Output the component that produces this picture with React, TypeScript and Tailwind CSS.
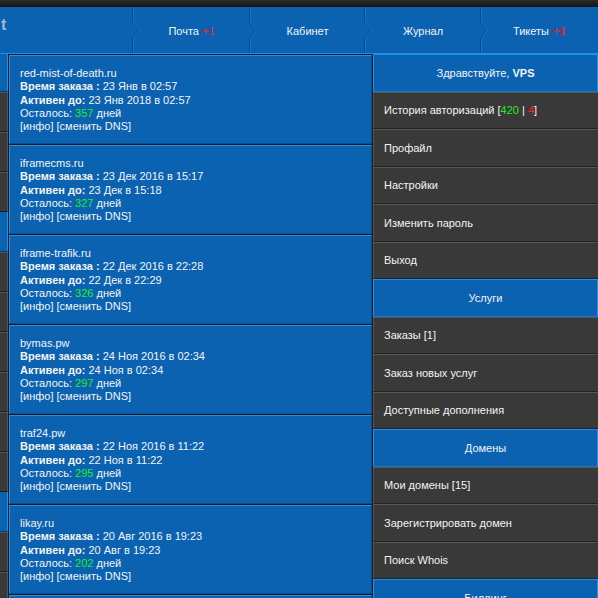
import React from "react";

const font = { fontFamily: '"Liberation Sans", Arial, sans-serif' };

const tabs = [
  { label: "Почта", badge: "+1", w: "w-[117px]", serif: false },
  { label: "Кабинет", w: "w-[115px]" },
  { label: "Журнал", w: "w-[116px]" },
  { label: "Тикеты", badge: "+1", w: "w-[117px]", serif: true },
];

const orders = [
  { domain: "red-mist-of-death.ru", ordered: "23 Янв в 02:57", active: "23 Янв 2018 в 02:57", left: 357 },
  { domain: "iframecms.ru", ordered: "23 Дек 2016 в 15:17", active: "23 Дек в 15:18", left: 327 },
  { domain: "iframe-trafik.ru", ordered: "22 Дек 2016 в 22:28", active: "22 Дек в 22:29", left: 326 },
  { domain: "bymas.pw", ordered: "24 Ноя 2016 в 02:34", active: "24 Ноя в 02:34", left: 297 },
  { domain: "traf24.pw", ordered: "22 Ноя 2016 в 11:22", active: "22 Ноя в 11:22", left: 295 },
  { domain: "likay.ru", ordered: "20 Авг 2016 в 19:23", active: "20 Авг в 19:23", left: 202 },
];

// левая полоска (обрезанное меню)
const strip = ["b", "d", "d", "d", "b", "d", "d", "d", "d", "d", "d", "b", "d", "d"];

type Item = { kind: "head" | "item"; text: React.ReactNode };

const menu: Item[] = [
  { kind: "head", text: <>Здравствуйте, <b>VPS</b></> },
  {
    kind: "item",
    text: (
      <>
        История авторизаций [<span className="text-[#22ee22]">420</span> | <span className="text-[#ff2222]">4</span>]
      </>
    ),
  },
  { kind: "item", text: "Профайл" },
  { kind: "item", text: "Настройки" },
  { kind: "item", text: "Изменить пароль" },
  { kind: "item", text: "Выход" },
  { kind: "head", text: "Услуги" },
  { kind: "item", text: "Заказы [1]" },
  { kind: "item", text: "Заказ новых услуг" },
  { kind: "item", text: "Доступные дополнения" },
  { kind: "head", text: "Домены" },
  { kind: "item", text: "Мои домены [15]" },
  { kind: "item", text: "Зарегистрировать домен" },
  { kind: "item", text: "Поиск Whois" },
  { kind: "head", text: "Биллинг" },
];

function Separator() {
  return (
    <svg className="absolute left-[-1px] top-0" width="10" height="46" viewBox="0 0 10 46">
      <path d="M0.5 0 V15 L6.5 23 L0.5 31 V46" fill="none" stroke="#0a4a8a" strokeWidth="1" />
      <path d="M1.5 0 V15 L7.5 23 L1.5 31 V46" fill="none" stroke="#1f7ed2" strokeWidth="1" opacity="0.6" />
    </svg>
  );
}

const cardCls =
  "h-[89px] shrink-0 bg-[#0a62b0] border border-t-[#2b8de2] border-l-[#2b8de2] border-r-[#0b4f90] border-b-[#0b4f90]";

export default function App() {
  return (
    <div className="w-[598px] h-[598px] overflow-hidden bg-[#1a1a1a] text-[11px] text-[#f4f4f4]" style={font}>
      {/* верхняя тёмная полоса */}
      <div className="h-[7px] bg-gradient-to-b from-[#2c2c2c] to-[#141414]" />

      {/* навигация */}
      <nav className="h-[47px] flex bg-[#0a62b0] border-b border-[#1d90ea]">
        <div className="w-[133px] flex items-start pt-[10px] pl-[1px]">
          <span className="text-[16px] font-bold text-[#a3b8cc] leading-none">t</span>
        </div>
        {tabs.map((t) => (
          <div key={t.label} className={`relative ${t.w} flex items-center justify-center pt-[2px]`}>
            <Separator />
            <span>
              {t.label}
              {t.badge && (
                <span
                  className={t.serif ? "text-[#ff1a1a] text-[13px] font-bold" : "text-[#ff1a1a]"}
                  style={t.serif ? { fontFamily: '"Liberation Serif", serif' } : undefined}
                >
                  {" "}
                  {t.badge}
                </span>
              )}
            </span>
          </div>
        ))}
      </nav>

      <div className="flex">
        {/* левая полоска */}
        <div className="w-[8px] flex flex-col">
          {strip.map((s, i) => (
            <div
              key={i}
              className={`${i === 0 ? "h-[38px]" : "h-[40px]"} shrink-0 ${
                s === "b"
                  ? "bg-[#0a62b0] border-r border-b border-r-[#1d90ea] border-b-[#0c3d6b]"
                  : "bg-[#393939] border-t border-r border-b border-t-[#555] border-r-[#555] border-b-[#1c1c1c]"
              }`}
            />
          ))}
        </div>

        {/* заказы */}
        <div className="ml-[1px] w-[363px] pt-[1px] flex flex-col gap-[1px]">
          {orders.map((o) => (
            <div key={o.domain} className={`${cardCls} pl-[10px] pt-[11px] leading-[13.25px]`}>
              <div>{o.domain}</div>
              <div>
                <b>Время заказа :</b> {o.ordered}
              </div>
              <div>
                <b>Активен до:</b> {o.active}
              </div>
              <div>
                Осталось: <span className="text-[#22ee22]">{o.left}</span> дней
              </div>
              <div>[инфо] [сменить DNS]</div>
            </div>
          ))}
          <div className={cardCls} />
        </div>

        {/* правое меню */}
        <div className="ml-[1px] flex-1 flex flex-col">
          {menu.map((m, i) =>
            m.kind === "head" ? (
              <div
                key={i}
                className="h-[37.5px] shrink-0 flex items-center justify-center bg-[#0a62b0] border border-t-[#1d90ea] border-l-[#1d90ea] border-r-[#1d90ea] border-b-[#1578c8]"
              >
                <span>{m.text}</span>
              </div>
            ) : (
              <div
                key={i}
                className="h-[37.5px] shrink-0 flex items-center pl-[10px] bg-[#393939] border border-t-[#575757] border-l-[#575757] border-r-[#3c3c3c] border-b-[#222]"
              >
                <span>{m.text}</span>
              </div>
            )
          )}
        </div>
      </div>
    </div>
  );
}
